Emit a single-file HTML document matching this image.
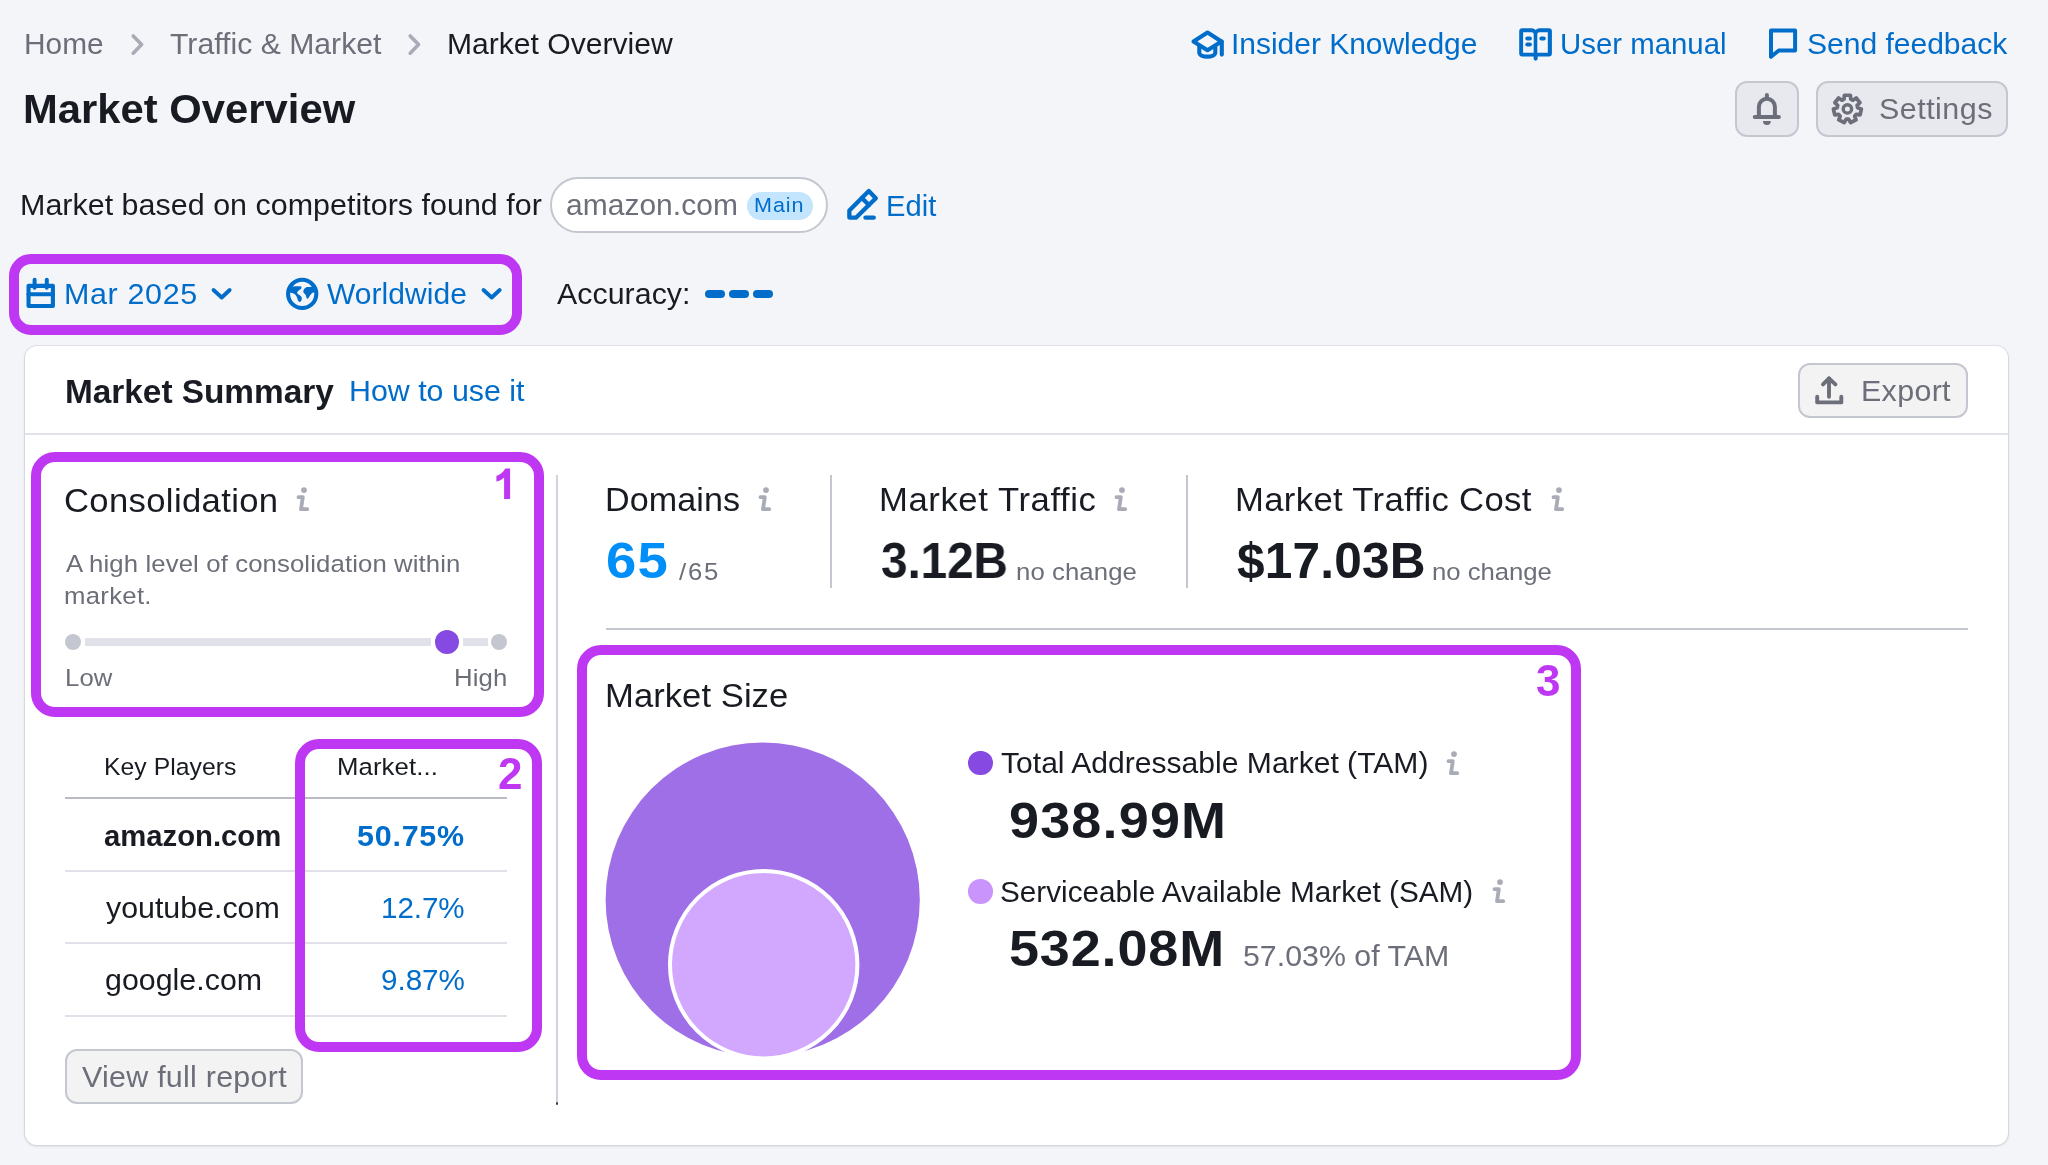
<!DOCTYPE html>
<html><head><meta charset="utf-8"><title>Market Overview</title>
<style>
html,body{margin:0;padding:0;}
body{width:2048px;height:1165px;overflow:hidden;background:#F4F5F9;position:relative;font-family:"Liberation Sans",sans-serif;}
body>div,body>svg{position:absolute;}
.t{white-space:nowrap;transform-origin:0 0;will-change:transform;}
</style></head><body>
<div style="left:25px;top:346px;width:1983px;height:799px;background:#fff;border-radius:12px;box-shadow:0 0 0 1px rgba(25,27,35,0.07), 0 1px 2px 1px rgba(25,27,35,0.08)"></div>
<div style="left:25px;top:433px;width:1983px;height:2px;background:#E0E1E9"></div>
<div style="left:1735px;top:81px;width:64px;height:56px;border:2px solid #C4C7CF;border-radius:12px;box-sizing:border-box;background:rgba(25,27,35,0.05)"></div>
<div style="left:1816px;top:81px;width:192px;height:56px;border:2px solid #C4C7CF;border-radius:12px;box-sizing:border-box;background:rgba(25,27,35,0.05)"></div>
<div style="left:1798px;top:363px;width:170px;height:55px;border:2px solid #C4C7CF;border-radius:12px;box-sizing:border-box;background:rgba(25,27,35,0.05)"></div>
<div style="left:550px;top:177px;width:278px;height:56px;border:2px solid #C4C7CF;border-radius:28px;box-sizing:border-box;background:#fff"></div>
<div style="left:747px;top:192px;width:66px;height:28px;background:#C4E5FE;border-radius:14px"></div>
<div style="left:704.5px;top:290px;width:20.0px;height:8px;background:#006DCA;border-radius:4px"></div>
<div style="left:729px;top:290px;width:20px;height:8px;background:#006DCA;border-radius:4px"></div>
<div style="left:753px;top:290px;width:20px;height:8px;background:#006DCA;border-radius:4px"></div>
<div style="left:555.5px;top:475px;width:2.0px;height:627px;background:#D1D3DA"></div>
<div style="left:555.5px;top:1102px;width:2.0px;height:2.5px;background:#3a3c44;border-radius:1px"></div>
<div style="left:829.5px;top:475px;width:2.0px;height:113px;background:#C4C7CF"></div>
<div style="left:1185.5px;top:475px;width:2.0px;height:113px;background:#C4C7CF"></div>
<div style="left:606px;top:628px;width:1362px;height:2px;background:#C4C7CF"></div>
<div style="left:65px;top:797px;width:442px;height:2px;background:#B8BBC4"></div>
<div style="left:65px;top:869.5px;width:442px;height:2.0px;background:#E0E1E9"></div>
<div style="left:65px;top:942px;width:442px;height:2px;background:#E0E1E9"></div>
<div style="left:65px;top:1014.5px;width:442px;height:2.0px;background:#E0E1E9"></div>
<div style="left:65px;top:1049px;width:238px;height:55px;border:2px solid #C4C7CF;border-radius:12px;box-sizing:border-box;background:rgba(25,27,35,0.05)"></div>
<div style="left:84.5px;top:638px;width:346.5px;height:8px;background:#E0E1E9;border-radius:0"></div>
<div style="left:463px;top:638px;width:25px;height:8px;background:#E0E1E9"></div>
<div style="left:64.6px;top:633.7px;width:16.6px;height:16.6px;background:#C4C7CF;border-radius:50%"></div>
<div style="left:491px;top:634px;width:16px;height:16px;background:#C4C7CF;border-radius:50%"></div>
<div style="left:435px;top:630px;width:24px;height:24px;background:#8649E1;border-radius:50%"></div>
<svg style="left:590px;top:730px" width="350" height="350" viewBox="590 730 350 350"><circle cx="762.7" cy="899.7" r="157.1" fill="#9F6FE8"/><circle cx="763.7" cy="964.7" r="93.7" fill="#D2A8FE" stroke="#fff" stroke-width="4"/></svg>
<div style="left:968px;top:750.5px;width:24.5px;height:24.5px;background:#8649E1;border-radius:50%"></div>
<div style="left:968px;top:879.3px;width:24.5px;height:24.4px;background:#C995FC;border-radius:50%"></div>
<svg style="left:120px;top:25px" width="30" height="40" viewBox="0 0 30 40"><path d="M13.2 11 L21.6 19.6 L13.2 28.2" fill="none" stroke="#A9ABB6" stroke-width="3.6" stroke-linecap="round" stroke-linejoin="round" /></svg>
<svg style="left:397.3px;top:25px" width="30" height="40" viewBox="0 0 30 40"><path d="M13.2 11 L21.6 19.6 L13.2 28.2" fill="none" stroke="#A9ABB6" stroke-width="3.6" stroke-linecap="round" stroke-linejoin="round" /></svg>
<svg style="left:1185px;top:25px" width="45" height="40" viewBox="0 0 45 40"><path d="M8.5 16.5 L22.5 7.5 L36.5 16.5 L22.5 25.2 Z" fill="none" stroke="#006DCA" stroke-width="4.1" stroke-linecap="round" stroke-linejoin="round" /><path d="M14.3 21 V27.5 C14.3 30.2 18 31.6 22.3 31.6 C26.6 31.6 30.3 30.2 30.3 27.5 V21" fill="none" stroke="#006DCA" stroke-width="4.1" stroke-linecap="round" stroke-linejoin="round" /><path d="M36.8 16.5 V29.6" fill="none" stroke="#006DCA" stroke-width="4.1" stroke-linecap="round" stroke-linejoin="round" /></svg>
<svg style="left:1514px;top:24px" width="44" height="40" viewBox="0 0 44 40"><path fill-rule="evenodd" fill="#006DCA" d="M8.2 4.3 H18 Q20 4.3 21.6 5.9 Q23.2 4.3 25.2 4.3 H34.9 Q37.9 4.3 37.9 7.3 V29.6 Q37.9 32.6 34.9 32.6 H23.7 V34.6 Q23.7 36.7 21.6 36.7 Q19.6 36.7 19.6 34.6 V32.6 H8.2 Q5.2 32.6 5.2 29.6 V7.3 Q5.2 4.3 8.2 4.3 Z M9.1 8.2 V28.8 H19.7 V10.2 Q19.7 8.2 17.7 8.2 Z M25.3 8.2 Q23.3 8.2 23.3 10.2 V28.8 H33.8 V8.2 Z"/><rect x="11.3" y="12.4" width="6.6" height="4.1" rx="2" fill="#006DCA"/><rect x="11.3" y="18.5" width="6.6" height="4.1" rx="2" fill="#006DCA"/><rect x="25.4" y="12.4" width="6.4" height="4.1" rx="2" fill="#006DCA"/></svg>
<svg style="left:1763px;top:24px" width="40" height="40" viewBox="0 0 40 40"><path d="M8 32.7 V6.5 H32.1 V26.5 H15.8 Z" fill="none" stroke="#006DCA" stroke-width="4" stroke-linecap="round" stroke-linejoin="round" /></svg>
<svg style="left:1745px;top:88px" width="45" height="42" viewBox="0 0 45 42"><path d="M13.9 29 V18.7 A8 8 0 0 1 29.9 18.7 V29" fill="none" stroke="#6C6E79" stroke-width="4" stroke-linecap="round" stroke-linejoin="round" /><path d="M9.75 29 H33.9" fill="none" stroke="#6C6E79" stroke-width="4" stroke-linecap="round" stroke-linejoin="round" /><path d="M21.9 7 V10" fill="none" stroke="#6C6E79" stroke-width="4" stroke-linecap="round" stroke-linejoin="round" /><path d="M18 33 H25.8 A3.9 3.9 0 0 1 18 33 Z" fill="#6C6E79"/></svg>
<svg style="left:1825px;top:88px" width="45" height="42" viewBox="0 0 45 42"><path d="M19.05 11.16 L19.37 7.23 L25.43 7.23 L25.75 11.16 L27.92 12.21 L31.20 10.01 L34.98 14.75 L32.10 17.45 L32.64 19.80 L36.40 20.99 L35.05 26.90 L31.15 26.34 L29.65 28.22 L31.06 31.90 L25.60 34.53 L23.60 31.13 L21.20 31.13 L19.20 34.53 L13.74 31.90 L15.15 28.22 L13.65 26.34 L9.75 26.90 L8.40 20.99 L12.16 19.80 L12.70 17.45 L9.82 14.75 L13.60 10.01 L16.88 12.21 Z" fill="none" stroke="#6C6E79" stroke-width="3.7" stroke-linecap="round" stroke-linejoin="round" /><circle cx="22.4" cy="20.9" r="4.2" fill="none" stroke="#6C6E79" stroke-width="3.4"/></svg>
<svg style="left:840px;top:182px" width="42" height="42" viewBox="0 0 42 42"><path d="M9.35 35.55 V28.6 L28.8 9.1 L35.8 16.2 L16.2 35.55 Z" fill="none" stroke="#006DCA" stroke-width="4.3" stroke-linecap="round" stroke-linejoin="round" /><path d="M21.9 16 L28.95 23.05" fill="none" stroke="#006DCA" stroke-width="4.3" stroke-linecap="round" stroke-linejoin="round" /><path d="M25.5 35.6 H33.7" fill="none" stroke="#006DCA" stroke-width="4.4" stroke-linecap="round" stroke-linejoin="round" /></svg>
<svg style="left:20px;top:272px" width="40" height="42" viewBox="0 0 40 42"><path d="M8.55 13.9 H32.9 V34 H8.55 Z" fill="none" stroke="#006DCA" stroke-width="4.1" stroke-linecap="round" stroke-linejoin="round" /><path d="M8.55 22.2 H32.9" fill="none" stroke="#006DCA" stroke-width="4.1" stroke-linecap="round" stroke-linejoin="round" /><path d="M14.6 7.8 V15.7" fill="none" stroke="#006DCA" stroke-width="4" stroke-linecap="round" stroke-linejoin="round" /><path d="M26.8 7.8 V15.7" fill="none" stroke="#006DCA" stroke-width="4" stroke-linecap="round" stroke-linejoin="round" /></svg>
<svg style="left:281px;top:272px" width="42" height="42" viewBox="0 0 42 42"><circle cx="21.2" cy="21.9" r="14.1" fill="none" stroke="#006DCA" stroke-width="4.1"/><path fill="#006DCA" d="M8 14.8 C11 14.6 15 14.1 19.4 14.3 C20.8 14.5 20.9 16 19.8 17 C18 18.6 15.8 19.6 16.2 21 C16.6 22.6 19.8 23.1 20.6 25.2 C21.3 27.2 20.2 29.9 18.7 29.9 C17.3 29.9 16.8 27.8 16.3 26.2 C15.5 23.6 14.3 21.6 11 20.9 C9.6 20.6 8.4 20.8 7.5 21 Z"/><path fill="#006DCA" d="M34.5 14.4 C32.6 14.5 29 14.6 26 15.1 C23.8 15.6 22.3 17.6 22.3 19.5 C22.3 21.3 24.2 22 24.8 23.2 C25.3 24.3 25.3 26.7 26.4 26.7 C27.4 26.7 28 25 28.6 24.2 C29.5 22.4 30.8 20.6 33.2 20.2 L35 20 Z"/></svg>
<svg style="left:205px;top:280px" width="35" height="30" viewBox="0 0 35 30"><path d="M8.5 10 L16.7 17.5 L24.7 10" fill="none" stroke="#006DCA" stroke-width="3.8" stroke-linecap="round" stroke-linejoin="round" /></svg>
<svg style="left:474.5px;top:280px" width="35" height="30" viewBox="0 0 35 30"><path d="M8.5 10 L16.7 17.5 L24.7 10" fill="none" stroke="#006DCA" stroke-width="3.8" stroke-linecap="round" stroke-linejoin="round" /></svg>
<svg style="left:1810px;top:370px" width="40" height="40" viewBox="0 0 40 40"><path d="M19 26.8 V8.5" fill="none" stroke="#6C6E79" stroke-width="3.9" stroke-linecap="round" stroke-linejoin="round" /><path d="M13 14.4 L19 8.3 L25.4 14.4" fill="none" stroke="#6C6E79" stroke-width="3.9" stroke-linecap="round" stroke-linejoin="round" /><path d="M7.2 26.8 V32.4 H31.3 V26.8" fill="none" stroke="#6C6E79" stroke-width="3.9" stroke-linecap="round" stroke-linejoin="round" /></svg>
<svg style="left:287.9px;top:480.3px" width="30" height="40" viewBox="0 0 30 40"><circle cx="16" cy="10.1" r="2.9" fill="#A9ABB6"/><path d="M10.5 17.2 H14.8 L13 29.2 H19.2" fill="none" stroke="#A9ABB6" stroke-width="3.8" stroke-linecap="round" stroke-linejoin="round" /></svg>
<svg style="left:750.2px;top:480.1px" width="30" height="40" viewBox="0 0 30 40"><circle cx="16" cy="10.1" r="2.9" fill="#A9ABB6"/><path d="M10.5 17.2 H14.8 L13 29.2 H19.2" fill="none" stroke="#A9ABB6" stroke-width="3.8" stroke-linecap="round" stroke-linejoin="round" /></svg>
<svg style="left:1106.3px;top:480.1px" width="30" height="40" viewBox="0 0 30 40"><circle cx="16" cy="10.1" r="2.9" fill="#A9ABB6"/><path d="M10.5 17.2 H14.8 L13 29.2 H19.2" fill="none" stroke="#A9ABB6" stroke-width="3.8" stroke-linecap="round" stroke-linejoin="round" /></svg>
<svg style="left:1543.4px;top:480.1px" width="30" height="40" viewBox="0 0 30 40"><circle cx="16" cy="10.1" r="2.9" fill="#A9ABB6"/><path d="M10.5 17.2 H14.8 L13 29.2 H19.2" fill="none" stroke="#A9ABB6" stroke-width="3.8" stroke-linecap="round" stroke-linejoin="round" /></svg>
<svg style="left:1438.2px;top:743.7px" width="30" height="40" viewBox="0 0 30 40"><circle cx="16" cy="10.1" r="2.9" fill="#A9ABB6"/><path d="M10.5 17.2 H14.8 L13 29.2 H19.2" fill="none" stroke="#A9ABB6" stroke-width="3.8" stroke-linecap="round" stroke-linejoin="round" /></svg>
<svg style="left:1484.4px;top:872.3px" width="30" height="40" viewBox="0 0 30 40"><circle cx="16" cy="10.1" r="2.9" fill="#A9ABB6"/><path d="M10.5 17.2 H14.8 L13 29.2 H19.2" fill="none" stroke="#A9ABB6" stroke-width="3.8" stroke-linecap="round" stroke-linejoin="round" /></svg>
<div class="t" style="left:23.77px;top:30px;font-size:29.0px;line-height:29.0px;font-weight:400;color:#6C6E79;letter-spacing:0.009px;transform:scaleX(1.029)">Home</div>
<div class="t" style="left:169.56px;top:30px;font-size:29.0px;line-height:29.0px;font-weight:400;color:#6C6E79;letter-spacing:0.016px;transform:scaleX(1.04)">Traffic &amp; Market</div>
<div class="t" style="left:446.54px;top:30px;font-size:29.0px;line-height:29.0px;font-weight:400;color:#191B23;letter-spacing:-0.005px;transform:scaleX(1.038)">Market Overview</div>
<div class="t" style="left:23.41px;top:89px;font-size:41.0px;line-height:41.0px;font-weight:700;color:#191B23;letter-spacing:0.008px;transform:scaleX(1.019)">Market Overview</div>
<div class="t" style="left:1230.91px;top:30px;font-size:29.0px;line-height:29.0px;font-weight:400;color:#006DCA;letter-spacing:-0.02px;transform:scaleX(1.034)">Insider Knowledge</div>
<div class="t" style="left:1559.73px;top:30px;font-size:29.0px;line-height:29.0px;font-weight:400;color:#006DCA;letter-spacing:0.001px;transform:scaleX(1.013)">User manual</div>
<div class="t" style="left:1806.9px;top:30px;font-size:29.0px;line-height:29.0px;font-weight:400;color:#006DCA;letter-spacing:-0.029px;transform:scaleX(1.037)">Send feedback</div>
<div class="t" style="left:1879.0px;top:95px;font-size:29.0px;line-height:29.0px;font-weight:400;color:#6C6E79;letter-spacing:0.454px;transform:scaleX(1.05)">Settings</div>
<div class="t" style="left:19.5px;top:191px;font-size:29.0px;line-height:29.0px;font-weight:400;color:#191B23;letter-spacing:0.014px;transform:scaleX(1.05)">Market based on competitors found for</div>
<div class="t" style="left:565.94px;top:191px;font-size:29.0px;line-height:29.0px;font-weight:400;color:#6C6E79;letter-spacing:0.039px;transform:scaleX(1.033)">amazon.com</div>
<div class="t" style="left:754.2px;top:195px;font-size:20.5px;line-height:20.5px;font-weight:400;color:#006DCA;letter-spacing:0.902px;transform:scaleX(1.05)">Main</div>
<div class="t" style="left:885.63px;top:192px;font-size:29.0px;line-height:29.0px;font-weight:400;color:#006DCA;letter-spacing:-0.004px;transform:scaleX(1.006)">Edit</div>
<div class="t" style="left:63.52px;top:280px;font-size:29.0px;line-height:29.0px;font-weight:400;color:#006DCA;letter-spacing:0.618px;transform:scaleX(1.05)">Mar 2025</div>
<div class="t" style="left:327.23px;top:280px;font-size:29.0px;line-height:29.0px;font-weight:400;color:#006DCA;letter-spacing:0.044px;transform:scaleX(1.035)">Worldwide</div>
<div class="t" style="left:556.72px;top:280px;font-size:29.0px;line-height:29.0px;font-weight:400;color:#191B23;letter-spacing:0.052px;transform:scaleX(1.045)">Accuracy:</div>
<div class="t" style="left:64.73px;top:375px;font-size:33.0px;line-height:33.0px;font-weight:700;color:#191B23;letter-spacing:-0.027px;transform:scaleX(1.012)">Market Summary</div>
<div class="t" style="left:349.06px;top:377px;font-size:29.0px;line-height:29.0px;font-weight:400;color:#006DCA;letter-spacing:-0.014px;transform:scaleX(1.048)">How to use it</div>
<div class="t" style="left:1860.53px;top:377px;font-size:29.0px;line-height:29.0px;font-weight:400;color:#6C6E79;letter-spacing:0.298px;transform:scaleX(1.05)">Export</div>
<div class="t" style="left:64.0px;top:484px;font-size:33.0px;line-height:33.0px;font-weight:400;color:#191B23;letter-spacing:0.325px;transform:scaleX(1.05)">Consolidation</div>
<div class="t" style="left:65.76px;top:552px;font-size:24.5px;line-height:24.5px;font-weight:400;color:#6C6E79;letter-spacing:0.109px;transform:scaleX(1.05)">A high level of consolidation within</div>
<div class="t" style="left:64.0px;top:584px;font-size:24.5px;line-height:24.5px;font-weight:400;color:#6C6E79;letter-spacing:0.271px;transform:scaleX(1.05)">market.</div>
<div class="t" style="left:64.87px;top:666px;font-size:24.5px;line-height:24.5px;font-weight:400;color:#6C6E79;letter-spacing:0.108px;transform:scaleX(1.048)">Low</div>
<div class="t" style="left:454.3px;top:666px;font-size:24.5px;line-height:24.5px;font-weight:400;color:#6C6E79;letter-spacing:0.113px;transform:scaleX(1.05)">High</div>
<div class="t" style="left:104.46px;top:755px;font-size:24.5px;line-height:24.5px;font-weight:400;color:#191B23;letter-spacing:0.036px;transform:scaleX(1.01)">Key Players</div>
<div class="t" style="left:337.47px;top:755px;font-size:24.5px;line-height:24.5px;font-weight:400;color:#191B23;letter-spacing:0.099px;transform:scaleX(1.05)">Market...</div>
<div class="t" style="left:104.44px;top:822px;font-size:29.0px;line-height:29.0px;font-weight:700;color:#191B23;letter-spacing:-0.017px;transform:scaleX(1.01)">amazon.com</div>
<div class="t" style="left:357.43px;top:822px;font-size:29.0px;line-height:29.0px;font-weight:700;color:#006DCA;letter-spacing:0.739px;transform:scaleX(1.05)">50.75%</div>
<div class="t" style="left:105.71px;top:894px;font-size:29.0px;line-height:29.0px;font-weight:400;color:#191B23;letter-spacing:-0.005px;transform:scaleX(1.047)">youtube.com</div>
<div class="t" style="left:381.06px;top:894px;font-size:29.0px;line-height:29.0px;font-weight:400;color:#006DCA;letter-spacing:-0.035px;transform:scaleX(1.019)">12.7%</div>
<div class="t" style="left:104.69px;top:966px;font-size:29.0px;line-height:29.0px;font-weight:400;color:#191B23;letter-spacing:0.013px;transform:scaleX(1.047)">google.com</div>
<div class="t" style="left:380.88px;top:966px;font-size:29.0px;line-height:29.0px;font-weight:400;color:#006DCA;letter-spacing:-0.029px;transform:scaleX(1.021)">9.87%</div>
<div class="t" style="left:81.68px;top:1063px;font-size:29.0px;line-height:29.0px;font-weight:400;color:#6C6E79;letter-spacing:0.238px;transform:scaleX(1.05)">View full report</div>
<div class="t" style="left:605.31px;top:483px;font-size:33.0px;line-height:33.0px;font-weight:400;color:#191B23;letter-spacing:0.09px;transform:scaleX(1.033)">Domains</div>
<div class="t" style="left:606.39px;top:536px;font-size:49.5px;line-height:49.5px;font-weight:700;color:#008FF8;letter-spacing:1.161px;transform:scaleX(1.1)">65</div>
<div class="t" style="left:678.67px;top:560px;font-size:24.5px;line-height:24.5px;font-weight:400;color:#6C6E79;letter-spacing:1.676px;transform:scaleX(1.05)">/65</div>
<div class="t" style="left:879.0px;top:483px;font-size:33.0px;line-height:33.0px;font-weight:400;color:#191B23;letter-spacing:0.558px;transform:scaleX(1.05)">Market Traffic</div>
<div class="t" style="left:880.74px;top:536px;font-size:49.5px;line-height:49.5px;font-weight:700;color:#191B23;letter-spacing:-0.143px;transform:scaleX(0.965)">3.12B</div>
<div class="t" style="left:1015.8px;top:560px;font-size:24.5px;line-height:24.5px;font-weight:400;color:#6C6E79;letter-spacing:0.079px;transform:scaleX(1.05)">no change</div>
<div class="t" style="left:1234.6px;top:483px;font-size:33.0px;line-height:33.0px;font-weight:400;color:#191B23;letter-spacing:0.332px;transform:scaleX(1.05)">Market Traffic Cost</div>
<div class="t" style="left:1236.6px;top:536px;font-size:49.5px;line-height:49.5px;font-weight:700;color:#191B23;letter-spacing:0.159px;transform:scaleX(1.002)">$17.03B</div>
<div class="t" style="left:1432.21px;top:560px;font-size:24.5px;line-height:24.5px;font-weight:400;color:#6C6E79;letter-spacing:-0.028px;transform:scaleX(1.05)">no change</div>
<div class="t" style="left:604.77px;top:679px;font-size:33.0px;line-height:33.0px;font-weight:400;color:#191B23;letter-spacing:0.029px;transform:scaleX(1.05)">Market Size</div>
<div class="t" style="left:1000.96px;top:749px;font-size:29.0px;line-height:29.0px;font-weight:400;color:#191B23;letter-spacing:0.004px;transform:scaleX(1.037)">Total Addressable Market (TAM)</div>
<div class="t" style="left:1008.8px;top:796px;font-size:49.5px;line-height:49.5px;font-weight:700;color:#191B23;letter-spacing:1.075px;transform:scaleX(1.09)">938.99M</div>
<div class="t" style="left:999.97px;top:878px;font-size:29.0px;line-height:29.0px;font-weight:400;color:#191B23;letter-spacing:0.003px;transform:scaleX(1.024)">Serviceable Available Market (SAM)</div>
<div class="t" style="left:1009.48px;top:924px;font-size:49.5px;line-height:49.5px;font-weight:700;color:#191B23;letter-spacing:0.79px;transform:scaleX(1.09)">532.08M</div>
<div class="t" style="left:1242.52px;top:942px;font-size:29.0px;line-height:29.0px;font-weight:400;color:#6C6E79;letter-spacing:0.013px;transform:scaleX(1.045)">57.03% of TAM</div>
<svg style="left:490px;top:460px" width="30" height="45" viewBox="490 460 30 45"><path fill="#BE37F2" d="M505.3 468.5 L510.1 468.5 L510.1 499 L504.1 499 L504.1 477.4 C502 479.5 499 481 496.4 481.5 L496.4 476 C500 474.5 503.5 472 505.3 468.5 Z"/></svg>
<div class="t" style="left:497.6px;top:752px;font-size:44.0px;line-height:44.0px;font-weight:700;color:#BE37F2;letter-spacing:0.0px">2</div>
<div class="t" style="left:1535.85px;top:659px;font-size:44.0px;line-height:44.0px;font-weight:700;color:#BE37F2;letter-spacing:0.0px">3</div>
<div style="left:9px;top:254px;width:513px;height:81px;border:10px solid #BE37F2;border-radius:22px;box-sizing:border-box"></div>
<div style="left:31px;top:452px;width:513px;height:265px;border:10px solid #BE37F2;border-radius:24px;box-sizing:border-box"></div>
<div style="left:295px;top:739px;width:247px;height:313px;border:10px solid #BE37F2;border-radius:24px;box-sizing:border-box"></div>
<div style="left:577px;top:645px;width:1004px;height:435px;border:10px solid #BE37F2;border-radius:24px;box-sizing:border-box"></div>
</body></html>
